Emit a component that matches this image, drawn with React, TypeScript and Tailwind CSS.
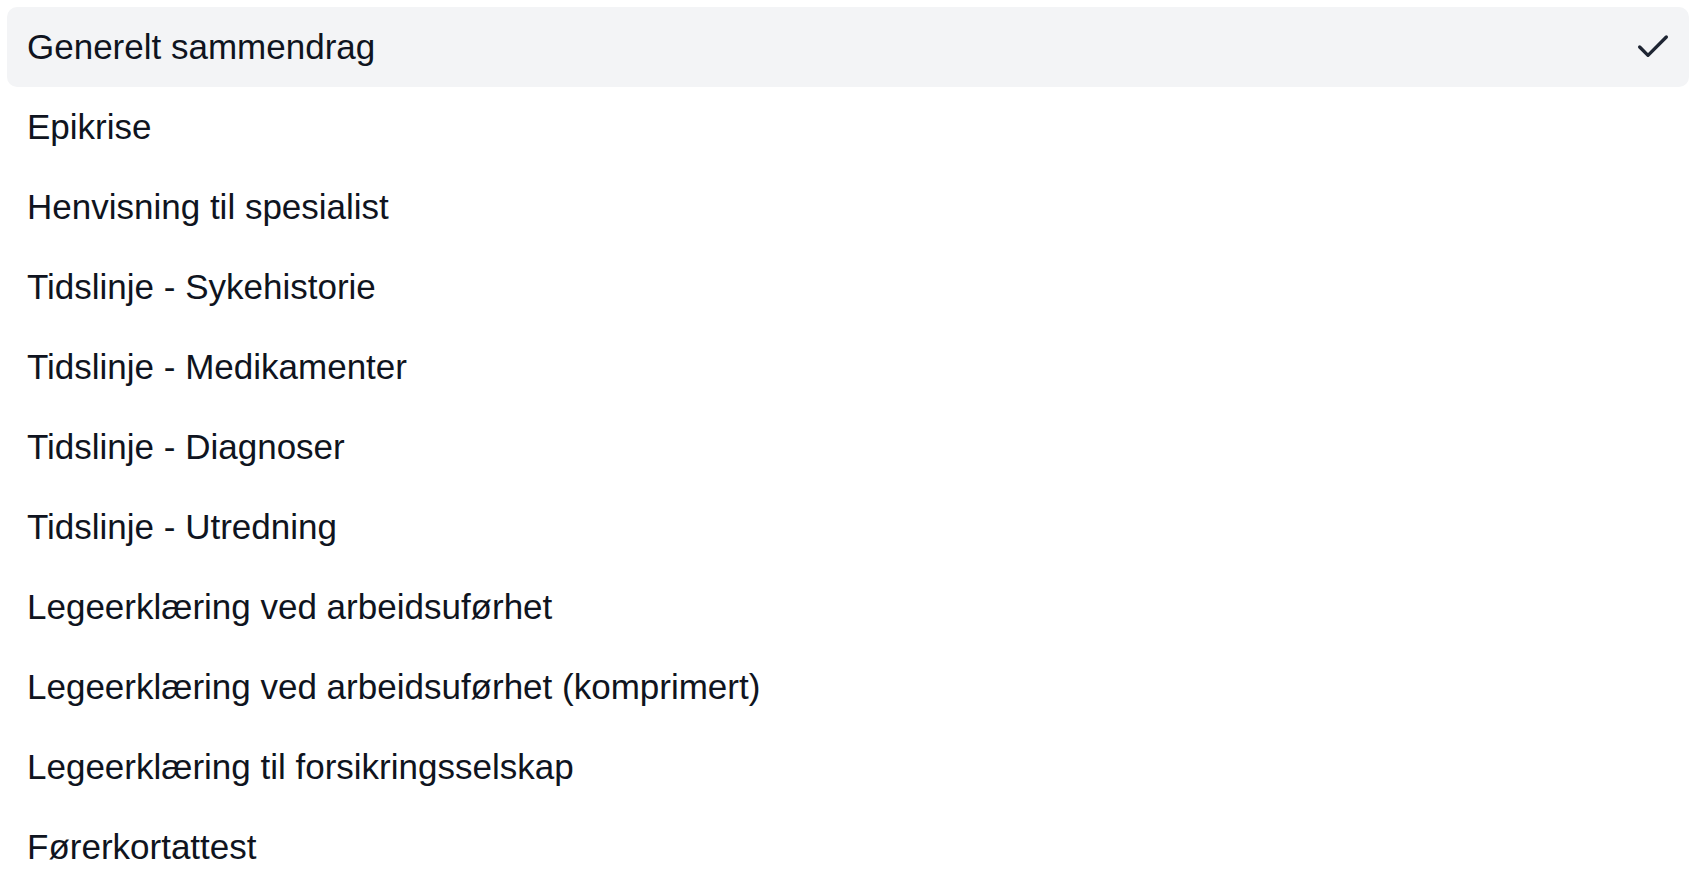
import { Check } from "lucide-react";

const maler = [
  "Generelt sammendrag",
  "Epikrise",
  "Henvisning til spesialist",
  "Tidslinje - Sykehistorie",
  "Tidslinje - Medikamenter",
  "Tidslinje - Diagnoser",
  "Tidslinje - Utredning",
  "Legeerklæring ved arbeidsuførhet",
  "Legeerklæring ved arbeidsuførhet (komprimert)",
  "Legeerklæring til forsikringsselskap",
  "Førerkortattest",
];

function App() {
  const valgt = "Generelt sammendrag";

  return (
    <div className="min-h-screen bg-white p-[7px] font-['Liberation_Sans',Arial,sans-serif]">
      <ul className="flex flex-col">
        {maler.map((mal) => (
          <li
            key={mal}
            className={`flex h-[80px] items-center justify-between rounded-[10px] pl-[20px] pr-[16px] text-[35px] text-[#0f1420] ${
              mal === valgt ? "bg-[#f3f4f6]" : ""
            }`}
          >
            <span>{mal}</span>
            {mal === valgt && <Check className="h-[40px] w-[40px] text-[#1e2533]" strokeWidth={2} />}
          </li>
        ))}
      </ul>
    </div>
  );
}

export default App;
